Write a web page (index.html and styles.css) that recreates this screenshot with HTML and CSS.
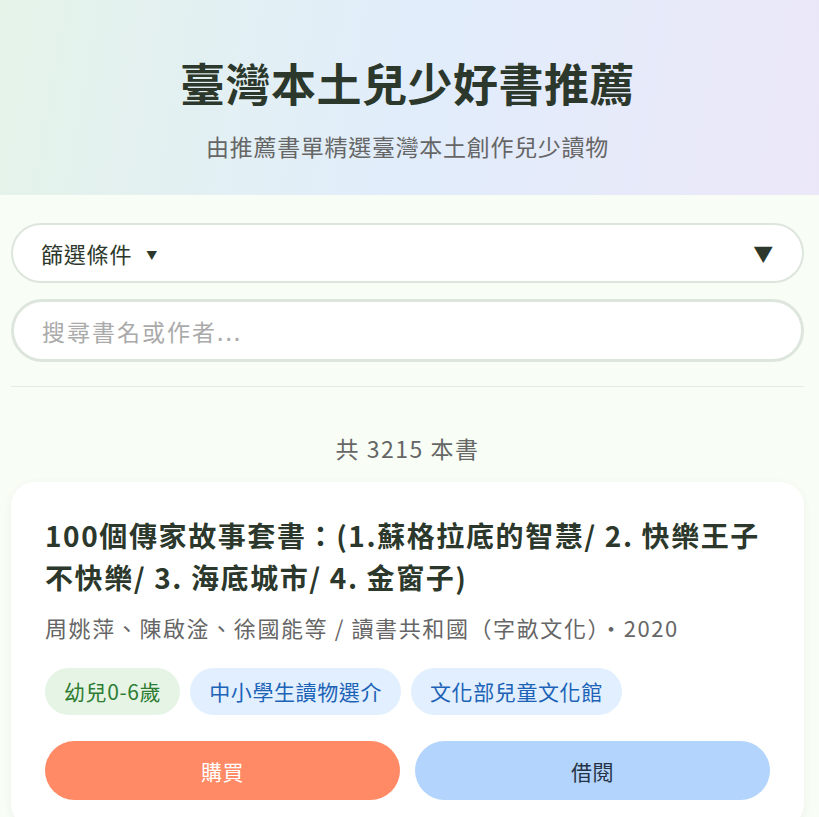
FILE: index.html
```html
<!DOCTYPE html>
<html lang="zh-Hant">
<head>
    <meta charset="UTF-8">
    <meta name="viewport" content="width=device-width, initial-scale=1.0">
    <title>臺灣本土兒少好書推薦</title>
    <link rel="stylesheet" href="styles.css">
</head>
<body>

<header class="hero">
    <h1>臺灣本土兒少好書推薦</h1>
    <p class="subtitle">由推薦書單精選臺灣本土創作兒少讀物</p>
</header>

<main class="page">
    <details class="filters">
        <summary>
            <span class="filters-label">篩選條件<span class="filters-marker">▼</span></span>
            <span class="filters-arrow">▼</span>
        </summary>
    </details>

    <input type="text" class="search" placeholder="搜尋書名或作者...">

    <hr class="divider">

    <p class="count">共 3215 本書</p>

    <article class="book">
        <h2 class="book-title">100個傳家故事套書：(1.蘇格拉底的智慧/ 2. 快樂王子不快樂/ 3. 海底城市/ 4. 金窗子)</h2>
        <p class="book-meta">周姚萍、陳啟淦、徐國能等 / 讀書共和國（字畝文化）・2020</p>
        <div class="tags">
            <span class="tag tag-age">幼兒0-6歲</span>
            <span class="tag tag-list">中小學生讀物選介</span>
            <span class="tag tag-list">文化部兒童文化館</span>
        </div>
        <div class="actions">
            <button class="btn btn-buy">購買</button>
            <button class="btn btn-borrow">借閱</button>
        </div>
    </article>
</main>

</body>
</html>
```

FILE: styles.css
```css
* {
    box-sizing: border-box;
}

body {
    margin: 0;
    background: #f8fdf6;
    color: #2b382b;
    font-family: "Noto Sans CJK TC", "Noto Sans", sans-serif;
}

.hero {
    height: 195px;
    padding: 50px 4px 0 0;
    text-align: center;
    background: linear-gradient(100deg, #e5f3e9 0%, #e1edfb 50%, #ebe7f8 100%);
}

.hero h1 {
    margin: 0;
    font-size: 45px;
    font-weight: 700;
    line-height: 66px;
    letter-spacing: 0.5px;
    color: #2b382b;
}

.subtitle {
    margin: 14px 0 0;
    font-size: 23px;
    line-height: 32px;
    letter-spacing: 0.7px;
    color: #666;
}

.page {
    padding: 28px 15px 0 11px;
}

.filters {
    background: #fff;
    border: 2px solid #dde6dd;
    border-radius: 30px;
}

.filters summary {
    display: flex;
    align-items: center;
    justify-content: space-between;
    height: 56px;
    padding: 0 28px 0 28px;
    font-size: 22px;
    letter-spacing: 0.8px;
    cursor: pointer;
}

.filters-marker {
    margin-left: 14px;
    font-size: 11px;
    vertical-align: 3px;
}

.filters-arrow {
    font-size: 20px;
}

.search {
    display: block;
    width: 100%;
    height: 63px;
    margin-top: 16px;
    padding: 0 28px;
    border: 3px solid #dde6dd;
    border-radius: 32px;
    background: #fff;
    font-family: inherit;
    font-size: 23px;
    letter-spacing: 2px;
    color: #2b382b;
    outline: none;
}

.search::placeholder {
    color: #aaa;
}

.divider {
    margin: 24px 0 0;
    border: 0;
    border-top: 1px solid #e5ebe5;
}

.count {
    margin: 45px 0 0;
    text-align: center;
    font-size: 23px;
    line-height: 32px;
    letter-spacing: 1.5px;
    color: #666;
}

.book {
    margin-top: 18px;
    padding: 32px 34px 28px;
    background: #fff;
    border-radius: 24px;
    box-shadow: 0 2px 10px rgba(0, 0, 0, 0.05);
}

.book-title {
    margin: 0;
    font-size: 28px;
    font-weight: 700;
    line-height: 42px;
    letter-spacing: 1.6px;
}

.book-meta {
    margin: 13px 0 0;
    font-size: 22px;
    line-height: 32px;
    letter-spacing: 1.6px;
    color: #666;
}

.tags {
    display: flex;
    gap: 10px;
    margin-top: 25px;
}

.tag {
    padding: 0 19px;
    height: 47px;
    line-height: 47px;
    border-radius: 24px;
    font-size: 21px;
    letter-spacing: 0.6px;
}

.tag-age {
    background: #e6f4e6;
    color: #2e7d32;
}

.tag-list {
    background: #e1effe;
    color: #1c63b7;
}

.actions {
    display: grid;
    grid-template-columns: 1fr 1fr;
    gap: 15px;
    margin-top: 26px;
}

.btn {
    height: 59px;
    border: 0;
    border-radius: 30px;
    font-family: inherit;
    font-size: 21px;
    letter-spacing: 0.5px;
}

.btn-buy {
    background: #ff8a65;
    color: #fff;
}

.btn-borrow {
    background: #b3d4fc;
    color: #263346;
}
```
